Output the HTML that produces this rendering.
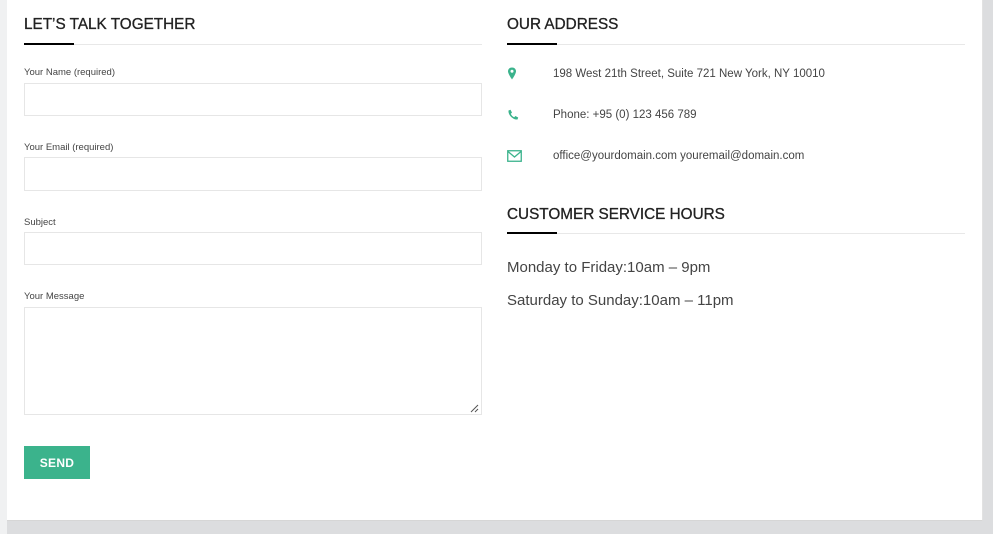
<!DOCTYPE html>
<html><head><meta charset="utf-8"><style>
*{margin:0;padding:0;box-sizing:border-box}
body{width:993px;height:534px;background:#dcdddf;position:relative;overflow:hidden;font-family:"Liberation Sans",Arial,sans-serif;color:#333}
.lstrip{position:absolute;left:0;top:0;width:7px;height:534px;background:#f0f1f2}
.card{position:absolute;left:7px;top:0;width:976px;height:521px;background:#fff;border-right:1px solid #e2e2e2;border-bottom:1px solid #d6d6d6}
.abs{position:absolute}
h2{position:absolute;font-size:15.3px;font-weight:normal;color:#222;-webkit-text-stroke:0.3px #222;white-space:nowrap}
.line{position:absolute;height:1px;background:#e8e8e8}
.bar{position:absolute;height:2px;background:#000;width:50px}
.lab{position:absolute;font-size:9.5px;color:#444;left:24px}
.inp{position:absolute;left:24px;width:458px;border:1px solid #e6e6e6;background:#fff}
.txt{position:absolute;left:553px;font-size:11.5px;color:#444;white-space:nowrap}
.hrs{position:absolute;left:507px;font-size:15px;color:#444;white-space:nowrap}
.btn{position:absolute;left:24px;top:446px;width:66px;height:33px;background:#3bb38c;color:#fff;font-size:12px;font-weight:bold;text-align:center;line-height:35px;letter-spacing:0.3px}
</style></head><body>
<div class="lstrip"></div>
<div class="card"></div>
<h2 style="left:24px;top:16px">LET’S TALK TOGETHER</h2>
<div class="line" style="left:24px;top:44px;width:458px"></div>
<div class="bar" style="left:24px;top:43px"></div>
<div class="lab" style="top:67px">Your Name (required)</div>
<div class="inp" style="top:83px;height:33px"></div>
<div class="lab" style="top:142px">Your Email (required)</div>
<div class="inp" style="top:157px;height:34px"></div>
<div class="lab" style="top:217px">Subject</div>
<div class="inp" style="top:232px;height:33px"></div>
<div class="lab" style="top:291px">Your Message</div>
<div class="inp" style="top:307px;height:108px"></div>
<svg class="abs" style="left:468px;top:402px" width="12" height="12"><path d="M3 10L10 3M7 10L10 7" stroke="#555" stroke-width="1"/></svg>
<div class="btn">SEND</div>

<h2 style="left:507px;top:16px">OUR ADDRESS</h2>
<div class="line" style="left:507px;top:44px;width:458px"></div>
<div class="bar" style="left:507px;top:43px"></div>
<svg class="abs" style="left:507px;top:67px" width="10" height="13" viewBox="0 0 10 13"><path d="M5 0.5C2.5 0.5 1 2.3 1 4.3C1 7 5 12.5 5 12.5S9 7 9 4.3C9 2.3 7.5 0.5 5 0.5Z" fill="#3bb38c"/><circle cx="5" cy="4.3" r="1.5" fill="#fff"/></svg>
<div class="txt" style="top:68px">198 West 21th Street, Suite 721 New York, NY 10010</div>
<svg class="abs" style="left:507px;top:109px" width="12" height="12" viewBox="0 0 12 12"><path d="M1.5 1.5L3.5 0.8L5 3.6L3.8 4.8C4.5 6.5 5.5 7.5 7.2 8.2L8.4 7L11.2 8.5L10.5 10.5C6 11 1 6 1.5 1.5Z" fill="#3bb38c"/></svg>
<div class="txt" style="top:109px">Phone: +95 (0) 123 456 789</div>
<svg class="abs" style="left:507px;top:150px" width="15" height="12" viewBox="0 0 15 12"><rect x="0.75" y="0.75" width="13.5" height="10.5" fill="none" stroke="#3bb38c" stroke-width="1.3"/><path d="M1 1.5L7.5 7L14 1.5" fill="none" stroke="#3bb38c" stroke-width="1.3"/></svg>
<div class="txt" style="top:150px">office@yourdomain.com youremail@domain.com</div>

<h2 style="left:507px;top:206px">CUSTOMER SERVICE HOURS</h2>
<div class="line" style="left:507px;top:233px;width:458px"></div>
<div class="bar" style="left:507px;top:232px"></div>
<div class="hrs" style="top:259px">Monday to Friday:10am – 9pm</div>
<div class="hrs" style="top:292px">Saturday to Sunday:10am – 11pm</div>
</body></html>
